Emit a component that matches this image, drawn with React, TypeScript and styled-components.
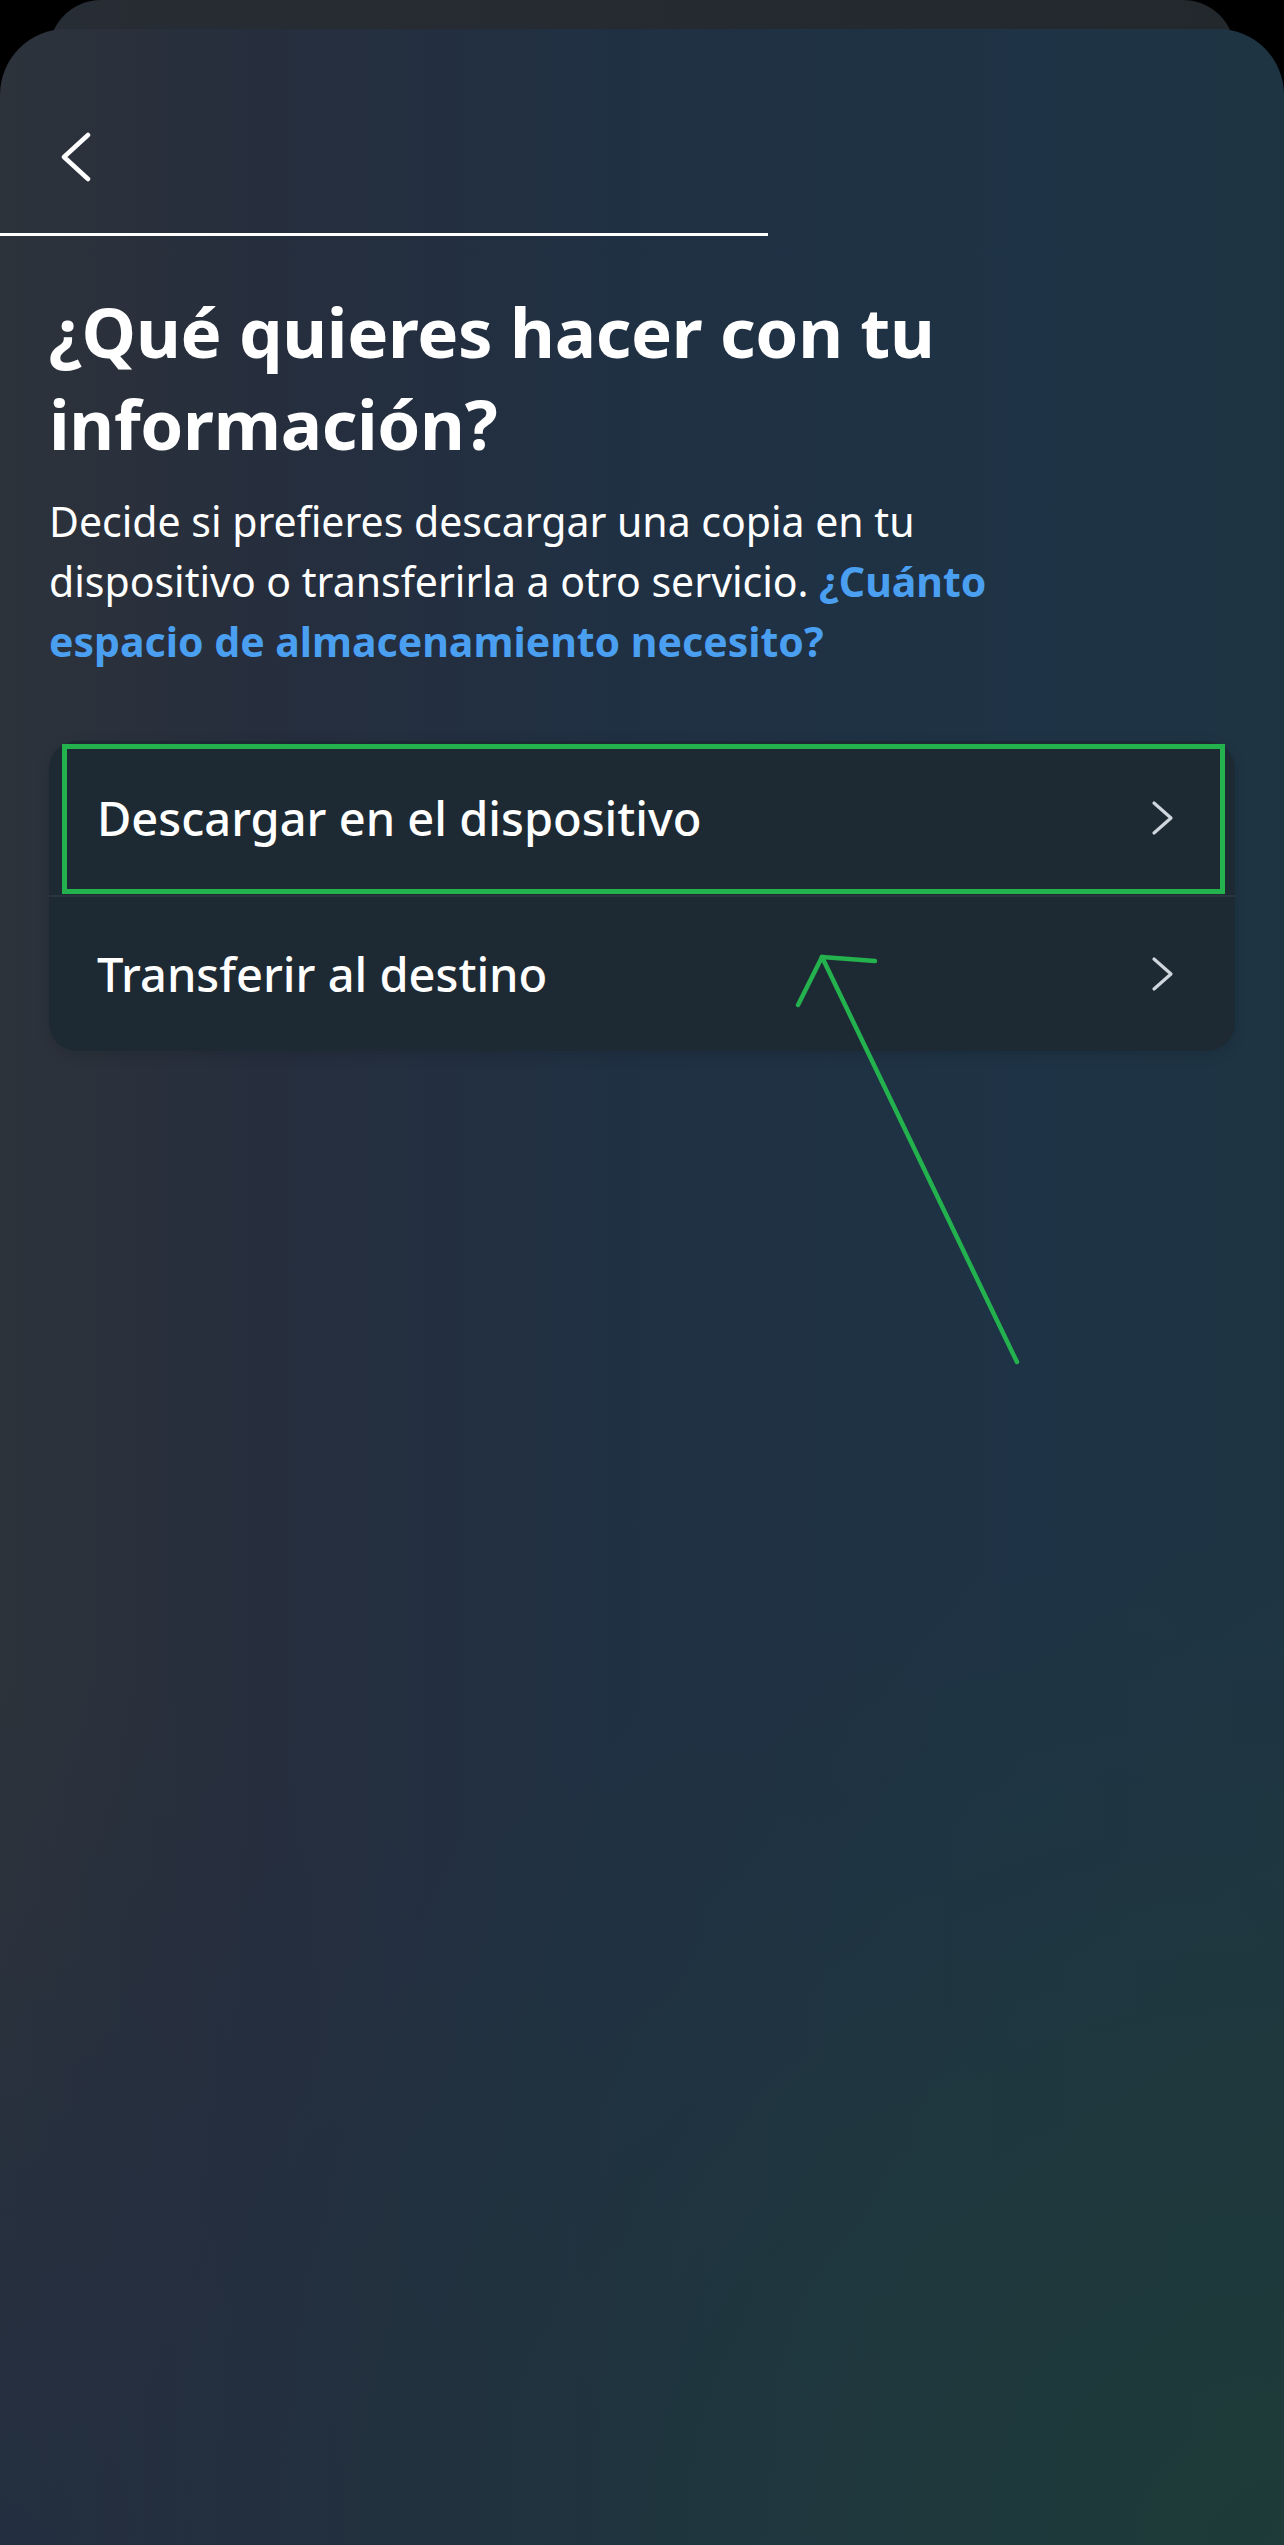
import React from "react";
import styled, { createGlobalStyle } from "styled-components";

const GlobalStyle = createGlobalStyle`
  html, body {
    margin: 0;
    padding: 0;
    background: #000;
  }
  * {
    box-sizing: border-box;
  }
`;

interface OptionItem {
  id: string;
  label: string;
  highlighted?: boolean;
}

const options: OptionItem[] = [
  { id: "download", label: "Descargar en el dispositivo", highlighted: true },
  { id: "transfer", label: "Transferir al destino" },
];

const ChevronLeft = () => (
  <svg width="34" height="50" viewBox="0 0 34 50" fill="none">
    <path
      d="M30 3 L6 25 L30 47"
      stroke="#fff"
      strokeWidth="4.5"
      strokeLinecap="round"
      strokeLinejoin="round"
    />
  </svg>
);

const ChevronRight = () => (
  <svg width="24" height="36" viewBox="0 0 24 36" fill="none">
    <path
      d="M3 3 L20 18 L3 33"
      stroke="#cfd6de"
      strokeWidth="3.2"
      strokeLinecap="round"
      strokeLinejoin="round"
    />
  </svg>
);

const App = () => {
  return (
    <Screen>
      <GlobalStyle />
      <BackSheet />
      <Sheet>
        <TopBar>
          <BackButton aria-label="Atrás">
            <ChevronLeft />
          </BackButton>
        </TopBar>
        <Progress />
        <Content>
          <Title>¿Qué quieres hacer con tu información?</Title>
          <Description>
            Decide si prefieres descargar una copia en tu dispositivo o
            transferirla a otro servicio.{" "}
            <HelpLink>¿Cuánto espacio de almacenamiento necesito?</HelpLink>
          </Description>
          <OptionCard>
            {options.map((item, index) => (
              <OptionRow key={item.id} divided={index > 0}>
                <span>{item.label}</span>
                <ChevronRight />
                {item.highlighted && <Highlight />}
              </OptionRow>
            ))}
          </OptionCard>
        </Content>
      </Sheet>
      <Annotation width="1284" height="2545" viewBox="0 0 1284 2545">
        <g
          stroke="#23b24e"
          strokeWidth="4.5"
          strokeLinecap="round"
          fill="none"
        >
          <line x1="1017" y1="1362" x2="822" y2="957" />
          <line x1="822" y1="957" x2="798" y2="1005" />
          <line x1="822" y1="957" x2="875" y2="961" />
        </g>
      </Annotation>
    </Screen>
  );
};

export default App;

const Screen = styled.div`
  position: relative;
  width: 1284px;
  height: 2545px;
  background: #000;
  display: flex;
  flex-direction: column;
  overflow: hidden;
  font-family: "Noto Sans", "Open Sans", sans-serif;
  color: #fff;
`;

const BackSheet = styled.div`
  flex: 0 0 auto;
  height: 80px;
  margin: 0 49px -51px;
  border-radius: 52px 52px 0 0;
  background: linear-gradient(to right, #272d34, #23282d);
`;

const Sheet = styled.div`
  flex: 1;
  display: flex;
  flex-direction: column;
  border-radius: 66px 66px 0 0;
  background:
    radial-gradient(
      ellipse 90% 40% at 100% 100%,
      rgba(30, 60, 54, 0.85),
      rgba(30, 60, 54, 0) 100%
    ),
    radial-gradient(
      ellipse 55% 35% at 0% 100%,
      rgba(33, 45, 64, 0.85),
      rgba(33, 45, 64, 0) 100%
    ),
    linear-gradient(
      to right,
      #2d333b 0%,
      #262e3d 20%,
      #203043 48%,
      #1e3345 80%,
      #1e3443 100%
    );
`;

const TopBar = styled.div`
  height: 204px;
  padding: 103px 0 0 58px;
`;

const BackButton = styled.div`
  width: 34px;
  height: 50px;
  display: flex;
`;

const Progress = styled.div`
  width: 768px;
  height: 3px;
  background: #fff;
`;

const Content = styled.div`
  padding: 49px 49px 0;
  display: flex;
  flex-direction: column;
`;

const Title = styled.h1`
  margin: 0;
  font-size: 69px;
  line-height: 92px;
  font-weight: 700;
  letter-spacing: -0.3px;
  width: 1000px;
`;

const Description = styled.p`
  margin: 22px 0 0;
  font-size: 41px;
  line-height: 60px;
  font-weight: 400;
  width: 1040px;
`;

const HelpLink = styled.span`
  color: #4a9ff0;
  font-weight: 700;
`;

const OptionCard = styled.div`
  margin-top: 70px;
  background: #1e2a33;
  border-radius: 28px;
  box-shadow: 0 4px 14px rgba(0, 0, 0, 0.12);
`;

const OptionRow = styled.div<{ divided: boolean }>`
  position: relative;
  height: ${(props) => (props.divided ? 156 : 154)}px;
  display: flex;
  align-items: center;
  justify-content: space-between;
  padding: 0 60px 0 48px;
  border-top: ${(props) => (props.divided ? "2px solid #2a353f" : "none")};
  font-size: 47px;
  font-weight: 500;
`;

const Highlight = styled.div`
  position: absolute;
  left: 13px;
  right: 10px;
  top: 3px;
  bottom: 1px;
  border: 5px solid #23b24e;
  pointer-events: none;
`;

const Annotation = styled.svg`
  position: absolute;
  left: 0;
  top: 0;
  pointer-events: none;
`;
